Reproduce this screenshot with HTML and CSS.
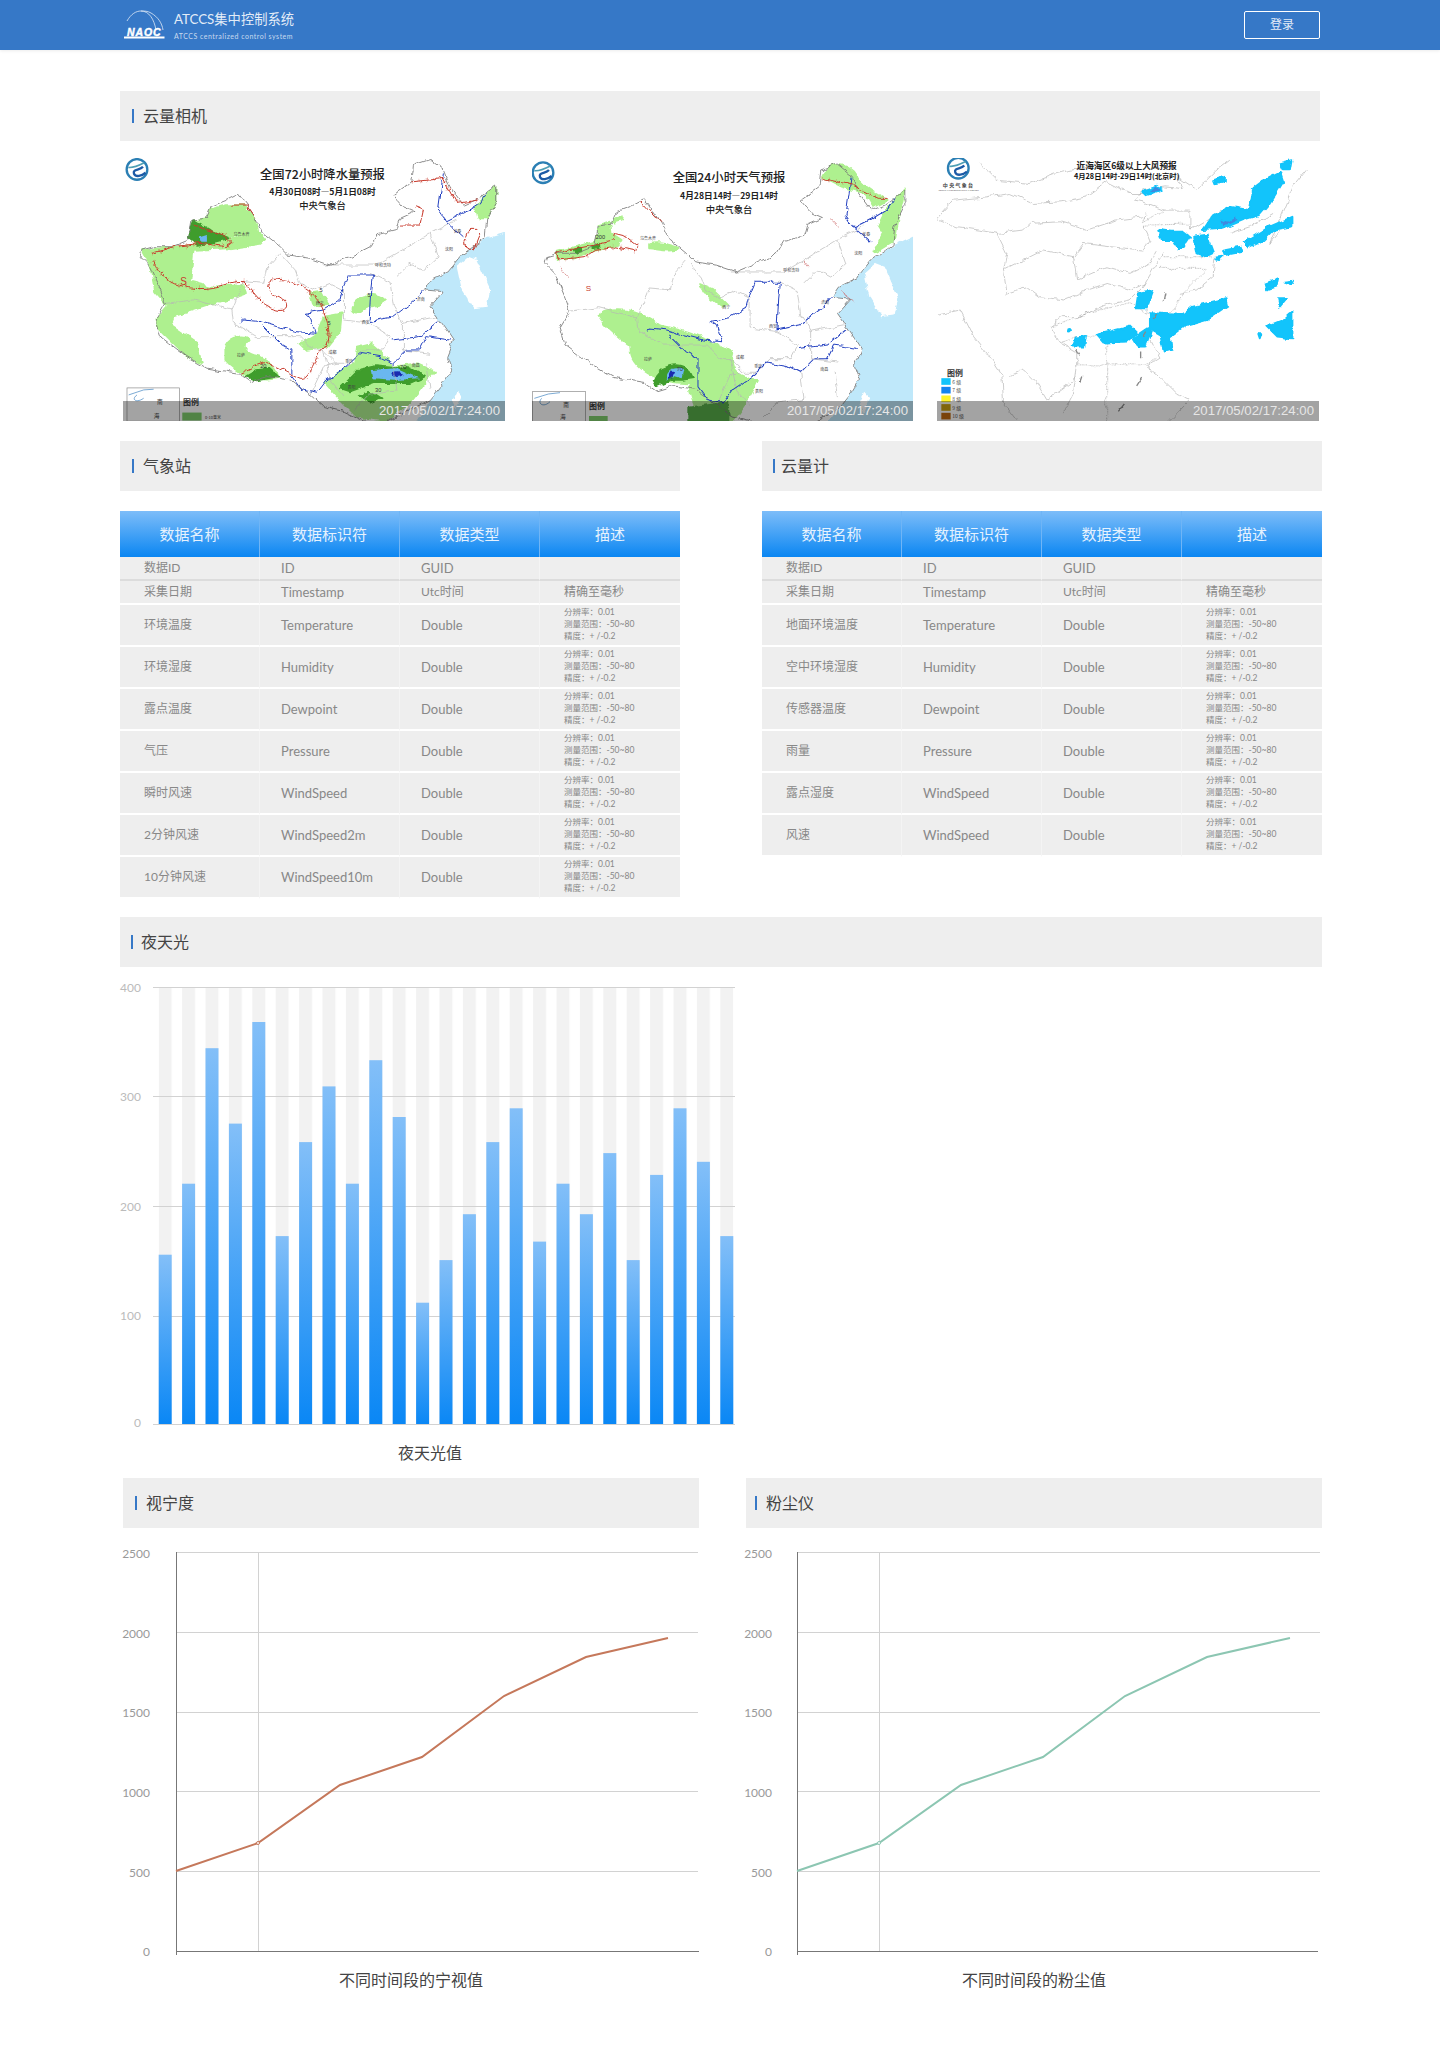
FILE: index.html
```html
<!DOCTYPE html>
<html lang="zh-CN">
  <head>
    <meta charset="UTF-8" />
    <title>ATCCS集中控制系统</title>
    <link rel="stylesheet" href="styles.css">
  </head>
  <body>
    <div class="top">
      <div class="brand">
        <svg class="logo" viewBox="0 0 44 30" width="44" height="30">
          <path d="M5 11C9 4 14 1 19 1c8 0 13 8 15 19" fill="none" stroke="#dfeaf6" stroke-width=".8"/>
          <path d="M19 1c3 0 7 0 10 2 7 4 11 10 12 17" fill="none" stroke="#dfeaf6" stroke-width=".8"/>
          <text x="5" y="25.500" class="logo-word">NAOC</text>
          <rect x="2" y="26.500" width="40.500" height="2" fill="#fff"/>
        </svg>
        <div class="brand-text">
          <div class="brand-name">ATCCS集中控制系统</div>
          <div class="brand-sub">ATCCS centralized control system</div>
        </div>
      </div>
      <a class="login">登录</a>
    </div>

    <div class="wrap">
      <h2 class="bar bar-first"><span>云量相机</span></h2>

      <div class="shots">
        <div class="shot shot-a">
          <svg viewBox="38 24 1147 789" width="382" height="263">
            <defs>
              <filter id="rough" x="-5%" y="-5%" width="110%" height="110%" color-interpolation-filters="sRGB">
                <feTurbulence type="fractalNoise" baseFrequency="0.035" numOctaves="3" seed="4"/>
                <feDisplacementMap in="SourceGraphic" scale="18" xChannelSelector="R" yChannelSelector="G"/>
                <feGaussianBlur stdDeviation="0.9"/>
              </filter>
              <path id="china-land" d="M95 300L130 290 185 290 235 270 245 210 285 205 300 170 350 150 385 132 410 165 437 205 460 250 510 290 535 315 600 325 660 345 720 320 780 290 800 255 860 240 870 205 915 185 880 170 850 135 905 95 910 45 960 28 1000 60 1020 110 1060 165 1105 145 1160 105 1160 150 1130 210 1125 265 1060 310 1015 365 965 390 945 420 1000 425 960 470 1010 540 1030 570 1010 620 1025 660 1000 700 960 750 880 790 800 830 700 785 640 770 600 735 565 710 540 690 470 680 420 695 385 670 290 655 230 620 150 560 135 510 165 460 150 420 120 350 90 320Z"/>
              <path id="china-prov" d="M510 310L470 355 460 400 400 395 365 480 370 520M520 320L555 360 570 400 610 420 660 400 700 420M640 345L800 345 860 310 960 250 1040 210M700 420L700 510 780 520 840 560 820 600 760 600 720 640 680 640 640 600M780 370L840 400 850 470 880 520 980 500M880 520L880 600 960 610M850 640L860 720 780 730 730 780M950 640L960 720M600 735L640 650 680 640M370 520L440 560 570 560 610 600 640 600M165 460L250 450 365 480M960 250L985 320 940 360 900 340 860 380M640 600L660 690 700 740"/>
              <path id="china-rivers" d="M390 520L400 510 450 515 500 530 560 545 615 550 600 500 585 490 640 480 690 450 700 410 715 375 790 375 785 420 780 515 850 500 915 450 940 420M460 530L510 580 545 600 545 680 575 720 620 730 650 690 710 650 750 610 810 620 850 640 890 600 930 600 950 560 1020 570M845 570L930 560 985 515M1000 70L985 180 1010 215 1060 260M1010 215L1060 190 1110 160 1130 130"/>
              <g id="naoc-mark">
                <circle r="31" fill="#fff" stroke="#2b7fb4" stroke-width="7"/>
                <path d="M-26 -6C-12 -4 6 -12 22 -20" fill="none" stroke="#4f9fb5" stroke-width="5"/>
                <path d="M18 -8C8 4 -14 -2 -9 13 -4 24 14 20 26 10" fill="none" stroke="#1c5aa6" stroke-width="7"/>
              </g>
            </defs>
            <rect x="38" y="24" width="1147" height="789" fill="#fff"/>
            <g filter="url(#rough)">
              <path class="sea" d="M1215 240L1130 265 1060 310 1015 365 965 390 945 420 1000 425 960 470 1010 540 1030 570 1010 620 1025 660 1000 700 960 750 900 850 1215 850Z"/>
              <path class="korea" d="M1040 350L1075 320 1100 330 1140 420 1130 470 1090 475 1055 420Z"/>
              <path class="korea" d="M1042 720L1056 735 1036 775 1026 755Z"/>
              <use href="#china-land" class="land"/>
              <path class="g1" d="M95 300L240 285 360 268 450 250 465 268 450 282 360 295 250 300 240 395 300 410 400 405 410 430 330 458 230 442 170 465 135 425 120 350Z"/>
              <path class="g1" d="M300 178L350 165 400 165 437 205 445 250 350 262 250 210 285 205Z"/>
              <path class="g1" d="M172 468L230 445 320 458 190 500 180 525 260 580 275 640 230 620 140 530 135 510Z"/>
              <path class="g1" d="M345 590C360 555 420 550 415 575 395 590 400 610 450 620 490 640 510 670 500 685 440 700 380 670 345 630Z"/>
              <path class="g1" d="M600 430L635 425 655 465 610 470ZM725 465C750 430 800 425 825 450 815 470 780 465 760 480 735 500 720 490 725 465ZM640 500L695 490 690 540 650 590 590 600 570 580 620 550Z"/>
              <path class="g1" d="M1098 170L1135 125 1160 110 1160 150 1130 205 1105 205ZM740 590L780 580 815 610 850 650 920 640 975 665 945 700 900 760 830 813 740 800 690 750 645 700 680 670 735 640Z"/>
              <path class="g2" d="M235 265L250 210 300 240 360 265 300 280 260 285Z"/>
              <path class="g2" d="M405 680L440 660 480 655 505 680 440 692ZM690 715L750 655 800 645 900 655 945 680 900 700 790 700 720 725ZM745 735L780 722 815 745 780 762Z"/>
              <path d="M785 660L860 655 925 685 860 690 790 685ZM265 262L290 255 290 275 270 275Z" fill="#6ab7ef"/>
              <ellipse cx="862" cy="674" rx="18" ry="7" fill="#1a2ab0"/>
              <use href="#china-prov" class="prov"/>
              <use href="#china-land" class="coast"/>
              <use href="#china-rivers" class="river"/>
              <path class="front" d="M125 310L190 290 270 280 350 290 365 280 340 255 250 225M130 335C160 400 220 420 290 415 340 410 370 390 400 395 430 420 450 470 500 480 540 490 530 450 500 440 470 430 460 400 490 388 550 385 600 420 630 460 660 520 670 590 630 600 610 640 600 690 570 685L540 670 470 635 430 650 390 670M905 95L1000 85 1040 160 1100 150M870 225L930 225 940 180 915 170M1105 235L1080 235 1060 280 1090 300 1110 250M365 165L410 165 435 200"/>
              <path class="front-tick" d="M125 310L190 290 270 280 350 290 365 280 340 255M130 335C160 400 220 420 290 415 340 410 370 390 400 395 430 420 450 470 500 480M490 388C550 385 600 420 630 460 660 520 670 590 630 600 610 640 600 690 570 685M905 95L1000 85 1040 160 1100 150"/>
            </g>
            <g transform="translate(80 58)"><use href="#naoc-mark"/></g>
            <text x="637" y="87" class="map-title" text-anchor="middle">全国72小时降水量预报</text>
            <text x="637" y="135" class="map-date" text-anchor="middle">4月30日08时—5月1日08时</text>
            <text x="637" y="178" class="map-org" text-anchor="middle">中央气象台</text>
            <text x="370" y="258" class="city">乌鲁木齐</text><text x="380" y="620" class="city">拉萨</text>
            <text x="655" y="612" class="city">成都</text><text x="705" y="640" class="city">重庆</text>
            <text x="712" y="716" class="city">贵阳</text><text x="905" y="652" class="city">南昌</text>
            <text x="920" y="452" class="city">济南</text><text x="1030" y="248" class="city">长春</text>
            <text x="1005" y="302" class="city">沈阳</text><text x="795" y="352" class="city">呼和浩特</text>
            <text x="755" y="522" class="city">西安</text><text x="617" y="464" class="city">西宁</text>
            <text x="628" y="425" class="num">5</text><text x="450" y="653" class="num">20</text>
            <text x="795" y="726" class="num">30</text><text x="870" y="657" class="num">70</text>
            <text x="772" y="440" class="num">5</text><text x="652" y="526" class="num">5</text>
            <text x="210" y="404" class="s-mark">S</text>
            <rect x="50" y="714" width="158" height="100" fill="#fff" stroke="#888" stroke-width="2"/>
            <path d="M55 735L100 720 130 718M80 735C60 750 80 760 100 745" fill="none" stroke="#3a7ebd" stroke-width="2"/>
            <text x="140" y="762" class="inset">南</text><text x="130" y="803" class="inset">海</text>
            <text x="218" y="764" class="legend-title">图例</text>
            <rect x="216" y="788" width="58" height="24" fill="#7fce6d"/>
            <text x="284" y="806" class="city">0-10毫米</text>
          </svg>
          <div class="stamp">2017/05/02/17:24:00</div>
        </div>

        <div class="shot shot-b">
          <svg viewBox="21 24 1143 789" width="381" height="263">
            <rect x="21" y="24" width="1143" height="789" fill="#fff"/>
            <g filter="url(#rough)">
              <g transform="translate(-31 14) scale(1.009 1.02)">
                <path class="sea" d="M1215 225L1130 265 1060 310 1015 365 965 390 945 420 1000 425 960 470 1010 540 1030 570 1010 620 1025 660 1000 700 960 750 900 830 1215 830Z"/>
                <path class="korea" d="M1040 350L1075 320 1100 330 1140 420 1130 470 1090 475 1055 420Z"/>
                <path class="korea" d="M1042 700L1056 715 1036 760 1026 735Z"/>
                <use href="#china-land" class="land"/>
              </g>
              <path class="g1" d="M890 80C905 45 950 30 985 65 1010 110 1050 125 1085 150L1045 172 1020 130 950 110Z"/>
              <path class="g1" d="M1085 175L1140 115 1115 240 1110 270 1045 310 1075 250 1060 225Z"/>
              <path class="g1" d="M220 225L255 215 260 250 290 270 280 285 210 300 150 325 95 330 95 305 210 275Z"/>
              <path class="g1" d="M262 208L288 198 285 212 265 218ZM372 282C400 275 450 285 458 295 440 305 400 295 372 292ZM522 402L565 420 610 465 590 470 540 430Z"/>
              <path class="g1" d="M220 495C260 470 340 475 400 525 480 540 560 570 625 610 610 660 640 680 700 690 680 730 660 770 610 830 520 830 500 760 490 700 400 700 320 660 315 590 280 560 230 520 220 495Z"/>
              <path d="M490 770L610 755 610 830 490 830Z" fill="#56ad48"/>
              <path class="g2" d="M385 690C400 650 460 625 495 665L505 685 470 690 440 690 395 710Z"/>
              <path d="M422 690C425 660 450 645 475 662L470 685 445 678Z" fill="#6ab7ef"/>
              <path d="M428 688L440 660 450 670 445 682Z" fill="#1a2ab0"/>
              <path class="g2" d="M145 298L165 292 170 305 150 308ZM200 290L222 280 225 292 205 295Z"/>
              <g transform="translate(-31 14) scale(1.009 1.02)">
                <use href="#china-prov" class="prov"/>
                <use href="#china-land" class="coast"/>
                <use href="#china-rivers" class="river"/>
              </g>
              <path class="front" d="M95 310L100 330 180 320 215 298 268 290 330 302 340 288 300 258 268 250 265 272 210 285 130 300ZM350 155L408 218M890 85L980 105 1060 145 1085 145"/>
              <path class="front-tick" d="M100 330L180 320 215 298 268 290 330 302 340 288 300 258M890 85L980 105 1060 145"/>
              <path d="M105 350L125 380M915 205L940 230M835 330L852 352M948 425L985 452" stroke="#c66" stroke-width="2" fill="none"/>
            </g>
            <g transform="translate(54 68)"><use href="#naoc-mark"/></g>
            <text x="612" y="97" class="map-title" text-anchor="middle">全国24小时天气预报</text>
            <text x="612" y="146" class="map-date" text-anchor="middle">4月28日14时—29日14时</text>
            <text x="612" y="188" class="map-org" text-anchor="middle">中央气象台</text>
            <text x="345" y="270" class="city">乌鲁木齐</text><text x="357" y="632" class="city">拉萨</text>
            <text x="633" y="626" class="city">成都</text><text x="688" y="654" class="city">重庆</text>
            <text x="690" y="728" class="city">贵阳</text><text x="886" y="664" class="city">南昌</text>
            <text x="888" y="462" class="city">济南</text><text x="1012" y="258" class="city">长春</text>
            <text x="988" y="316" class="city">沈阳</text><text x="775" y="366" class="city">呼和浩特</text>
            <text x="732" y="534" class="city">西安</text><text x="592" y="476" class="city">西宁</text>
            <text x="455" y="664" class="num">70</text><text x="212" y="268" class="num">200</text>
            <text x="182" y="424" class="s-mark s-small">S</text>
            <rect x="23" y="724" width="158" height="95" fill="#fff" stroke="#888" stroke-width="2"/>
            <path d="M28 745L70 732 105 728M50 745C35 760 55 775 75 755" fill="none" stroke="#3a7ebd" stroke-width="2"/>
            <text x="115" y="772" class="inset">南</text><text x="105" y="806" class="inset">海</text>
            <text x="192" y="776" class="legend-title">图例</text>
            <rect x="192" y="798" width="56" height="20" fill="#7fce6d"/>
          </svg>
          <div class="stamp">2017/05/02/17:24:00</div>
        </div>

        <div class="shot shot-c">
          <svg viewBox="20 24 1148 789" width="382" height="263">
            <rect x="20" y="24" width="1148" height="789" fill="#fff"/>
            <g filter="url(#rough)">
              <path class="thin" d="M150 40L200 90 300 100 380 70 420 60 510 45M20 205L70 150 170 140 240 130 310 160 390 155 470 140 530 95 600 130 650 130M20 205L80 230 150 240 200 250 280 240 300 220 390 215 470 240 560 210 640 200M200 250L230 310 220 360 260 340 340 300 430 320 460 280 540 290 640 300 660 270 640 225M220 360L230 430 290 410 330 440 400 450 470 420 530 400 600 420 650 400M430 320L440 390 530 350 600 370 660 340 680 300M20 495L90 480 130 560 170 610 215 680 220 760 260 813M360 530L400 500 440 500 470 490 530 465 600 450 640 410 680 340 700 310M700 180L640 155 610 150 640 120 700 110 760 115 740 80 800 120 860 60 900 30M700 180L780 180 780 240 830 210 870 180M360 530L390 580 440 610 440 660 430 730 400 790M240 680L280 660 320 700 350 750 420 700 440 680M660 570L690 625 650 650 690 680 740 730 780 750 720 813M1050 240L1020 280 1060 180 1090 110 1130 60M855 320L850 380 800 420 750 430M900 250L960 230 1030 190"/>
              <path class="dash" d="M640 225L780 222 780 240M700 320L850 320M690 355L835 355 760 430 720 490 650 490 660 420M440 645L650 645 680 625M395 580L440 558 650 560 660 540M530 560L530 813M360 530L470 490 600 458 650 490M700 180L640 215 650 190"/>
              <path class="gust" d="M685 240L720 245 760 245 780 260 760 290 745 295 730 270 695 270ZM790 260L830 255 850 310 830 320 800 310ZM850 195L900 170 960 180 970 115 1010 85 1050 65 1060 95 1020 160 990 195 940 210 880 235 820 240ZM1050 40L1085 30 1080 60 1060 60ZM850 90L885 80 885 95 855 102ZM945 275L1020 230 1088 200 1088 228 1030 240 1000 270 955 292ZM880 300L930 290 935 305 885 315ZM860 322L875 320 865 330ZM1010 400L1045 388 1040 410 1015 418ZM1065 395L1090 392 1085 402ZM1045 445L1070 445 1050 470ZM1010 530L1060 510 1088 485 1088 565 1040 560ZM985 550L995 550 990 565ZM640 125L680 110 695 120 650 135ZM625 430L670 420 650 475 618 475ZM660 490L760 495 790 470 890 445 895 465 830 510 760 530 720 560 725 600 705 605 695 560 660 540ZM500 555L600 530 620 550 590 575 520 578ZM610 565L655 535 665 540 645 590 625 590ZM440 560L468 555 462 590 428 590Z"/>
              <path d="M875 205L895 215 915 200 920 210 895 222 880 225Z" fill="#3e8ae0"/>
              <path d="M660 122L680 110 690 120 670 128Z" fill="#3e8ae0"/>
              <circle cx="418" cy="544" r="7" fill="#12c4fb"/>
              <path d="M440 600L450 620M635 605V625M650 545L640 562M680 492L670 508M705 430L700 455M455 680L450 695M635 685L620 708M580 765L565 785" stroke="#888" stroke-width="4"/>
            </g>
            <g transform="translate(84 54)"><use href="#naoc-mark"/></g>
            <text x="85" y="110" class="org-cn" text-anchor="middle">中央气象台</text>
            <text x="85" y="124" class="org-en" text-anchor="middle">CENTRAL METEOROLOGICAL CENTER</text>
            <text x="590" y="55" class="wind-title" text-anchor="middle">近海海区6级以上大风预报</text>
            <text x="590" y="87" class="wind-date" text-anchor="middle">4月28日14时-29日14时(北京时)</text>
            <text x="50" y="678" class="legend-title">图例</text>
            <rect x="33" y="685" width="28" height="20" fill="#12c4fb"/><text x="66" y="702" class="lev">6 级</text>
            <rect x="33" y="711" width="28" height="20" fill="#1583ef"/><text x="66" y="728" class="lev">7 级</text>
            <rect x="33" y="737" width="28" height="20" fill="#fff22a"/><text x="66" y="754" class="lev">8 级</text>
            <rect x="33" y="763" width="28" height="20" fill="#c8a012"/><text x="66" y="780" class="lev">9 级</text>
            <rect x="33" y="789" width="28" height="20" fill="#bf6a10"/><text x="66" y="806" class="lev">10 级</text>
          </svg>
          <div class="stamp">2017/05/02/17:24:00</div>
        </div>
      </div>

      <div class="tables">
        <div class="col">
          <h2 class="bar"><span>气象站</span></h2>
          <table class="data">
            <tr><th>数据名称</th><th>数据标识符</th><th>数据类型</th><th>描述</th></tr>
            <tr class="r1"><td>数据ID</td><td>ID</td><td>GUID</td><td></td></tr>
            <tr class="r2"><td>采集日期</td><td>Timestamp</td><td class="mixed">Utc时间</td><td>精确至毫秒</td></tr>
            <tr><td>环境温度</td><td>Temperature</td><td>Double</td><td class="desc">分辨率：0.01<br>测量范围：-50~80<br>精度：+ /-0.2</td></tr>
            <tr><td>环境湿度</td><td>Humidity</td><td>Double</td><td class="desc">分辨率：0.01<br>测量范围：-50~80<br>精度：+ /-0.2</td></tr>
            <tr><td>露点温度</td><td>Dewpoint</td><td>Double</td><td class="desc">分辨率：0.01<br>测量范围：-50~80<br>精度：+ /-0.2</td></tr>
            <tr><td>气压</td><td>Pressure</td><td>Double</td><td class="desc">分辨率：0.01<br>测量范围：-50~80<br>精度：+ /-0.2</td></tr>
            <tr><td>瞬时风速</td><td>WindSpeed</td><td>Double</td><td class="desc">分辨率：0.01<br>测量范围：-50~80<br>精度：+ /-0.2</td></tr>
            <tr><td>2分钟风速</td><td>WindSpeed2m</td><td>Double</td><td class="desc">分辨率：0.01<br>测量范围：-50~80<br>精度：+ /-0.2</td></tr>
            <tr><td>10分钟风速</td><td>WindSpeed10m</td><td>Double</td><td class="desc">分辨率：0.01<br>测量范围：-50~80<br>精度：+ /-0.2</td></tr>
          </table>
        </div>
        <div class="col">
          <h2 class="bar bar-tight"><span>云量计</span></h2>
          <table class="data">
            <tr><th>数据名称</th><th>数据标识符</th><th>数据类型</th><th>描述</th></tr>
            <tr class="r1"><td>数据ID</td><td>ID</td><td>GUID</td><td></td></tr>
            <tr class="r2"><td>采集日期</td><td>Timestamp</td><td class="mixed">Utc时间</td><td>精确至毫秒</td></tr>
            <tr><td>地面环境温度</td><td>Temperature</td><td>Double</td><td class="desc">分辨率：0.01<br>测量范围：-50~80<br>精度：+ /-0.2</td></tr>
            <tr><td>空中环境湿度</td><td>Humidity</td><td>Double</td><td class="desc">分辨率：0.01<br>测量范围：-50~80<br>精度：+ /-0.2</td></tr>
            <tr><td>传感器温度</td><td>Dewpoint</td><td>Double</td><td class="desc">分辨率：0.01<br>测量范围：-50~80<br>精度：+ /-0.2</td></tr>
            <tr><td>雨量</td><td>Pressure</td><td>Double</td><td class="desc">分辨率：0.01<br>测量范围：-50~80<br>精度：+ /-0.2</td></tr>
            <tr><td>露点湿度</td><td>WindSpeed</td><td>Double</td><td class="desc">分辨率：0.01<br>测量范围：-50~80<br>精度：+ /-0.2</td></tr>
            <tr><td>风速</td><td>WindSpeed</td><td>Double</td><td class="desc">分辨率：0.01<br>测量范围：-50~80<br>精度：+ /-0.2</td></tr>
          </table>
        </div>
      </div>

      <h2 class="bar bar-night"><span>夜天光</span></h2>
      <svg class="chart-svg" viewBox="120 967 620 511" width="620" height="511">
        <defs>
          <pattern id="stripes" x="158.7" y="0" width="23.4" height="10" patternUnits="userSpaceOnUse">
            <rect width="13" height="10" fill="#f2f2f2"/>
          </pattern>
          <linearGradient id="barfill" x1="0" y1="0" x2="0" y2="1">
            <stop offset="0" stop-color="#83bff8"/>
            <stop offset="1" stop-color="#0a87f5"/>
          </linearGradient>
        </defs>
        <rect x="158.7" y="987" width="574.6" height="437" fill="url(#stripes)"/>
        <path class="grid" d="M153 987.5H735M153 1096.5H735M153 1206.5H735M153 1316.5H735M153 1424.5H735"/>
        <g fill="url(#barfill)">
          <rect x="158.7" y="1254.7" width="13" height="169.3"/>
          <rect x="182.1" y="1183.7" width="13" height="240.3"/>
          <rect x="205.5" y="1048.2" width="13" height="375.8"/>
          <rect x="228.9" y="1123.6" width="13" height="300.4"/>
          <rect x="252.3" y="1022" width="13" height="402"/>
          <rect x="275.7" y="1236.1" width="13" height="187.9"/>
          <rect x="299.1" y="1142.1" width="13" height="281.9"/>
          <rect x="322.5" y="1086.4" width="13" height="337.6"/>
          <rect x="345.9" y="1183.7" width="13" height="240.3"/>
          <rect x="369.3" y="1060.2" width="13" height="363.8"/>
          <rect x="392.7" y="1117" width="13" height="307"/>
          <rect x="416.1" y="1302.7" width="13" height="121.3"/>
          <rect x="439.5" y="1260.1" width="13" height="163.9"/>
          <rect x="462.9" y="1214.2" width="13" height="209.8"/>
          <rect x="486.3" y="1142.1" width="13" height="281.9"/>
          <rect x="509.7" y="1108.3" width="13" height="315.7"/>
          <rect x="533.1" y="1241.6" width="13" height="182.4"/>
          <rect x="556.5" y="1183.7" width="13" height="240.3"/>
          <rect x="579.9" y="1214.2" width="13" height="209.8"/>
          <rect x="603.3" y="1153.1" width="13" height="270.9"/>
          <rect x="626.7" y="1260.1" width="13" height="163.9"/>
          <rect x="650.1" y="1174.9" width="13" height="249.1"/>
          <rect x="673.5" y="1108.3" width="13" height="315.7"/>
          <rect x="696.9" y="1161.8" width="13" height="262.2"/>
          <rect x="720.3" y="1236.1" width="13" height="187.9"/>
        </g>
        <g class="ticks-night" text-anchor="end">
          <text x="141" y="992">400</text>
          <text x="141" y="1101">300</text>
          <text x="141" y="1211">200</text>
          <text x="141" y="1320">100</text>
          <text x="141" y="1427">0</text>
        </g>
        <text x="430" y="1459" class="caption" text-anchor="middle">夜天光值</text>
      </svg>

      <div class="lines">
        <div class="col-line">
          <h2 class="bar"><span>视宁度</span></h2>
          <svg class="chart-svg" viewBox="123 1528 576 472" width="576" height="472">
            <path class="grid" d="M176 1552.5H698M176 1632.5H698M176 1712.5H698M176 1791.5H698M176 1871.5H698M258.500 1552V1951"/>
            <path class="axis" d="M176.500 1552V1955M176 1951.500H699"/>
            <path class="line line-red" d="M176 1871L258 1843 340 1785 422 1757 504 1696 586 1657 668 1638"/>
            <circle cx="258" cy="1843" r="1.5" class="dot dot-red"/>
            <g class="ticks" text-anchor="end">
              <text x="150" y="1558">2500</text>
              <text x="150" y="1638">2000</text>
              <text x="150" y="1717">1500</text>
              <text x="150" y="1797">1000</text>
              <text x="150" y="1877">500</text>
              <text x="150" y="1956">0</text>
            </g>
            <text x="411" y="1986" class="caption" text-anchor="middle">不同时间段的宁视值</text>
          </svg>
        </div>
        <div class="col-line">
          <h2 class="bar bar-dust"><span>粉尘仪</span></h2>
          <svg class="chart-svg" viewBox="746 1528 576 472" width="576" height="472">
            <path class="grid" d="M797 1552.500H1320M797 1632.500H1320M797 1712.500H1320M797 1791.500H1320M797 1871.500H1320M879.500 1552V1951"/>
            <path class="axis" d="M797.500 1552V1955M797 1951.500H1318"/>
            <path class="line line-green" d="M797 1871L879 1843 961 1785 1043 1757 1125 1696 1207 1657 1290 1638"/>
            <circle cx="879" cy="1843" r="1.500" class="dot dot-green"/>
            <g class="ticks" text-anchor="end">
              <text x="772" y="1558">2500</text>
              <text x="772" y="1638">2000</text>
              <text x="772" y="1717">1500</text>
              <text x="772" y="1797">1000</text>
              <text x="772" y="1877">500</text>
              <text x="772" y="1956">0</text>
            </g>
            <text x="1034" y="1986" class="caption" text-anchor="middle">不同时间段的粉尘值</text>
          </svg>
        </div>
      </div>
    </div>
  </body>
</html>
```

FILE: styles.css
```css
* {
  box-sizing: border-box;
}

html,
body {
  margin: 0;
  padding: 0;
}

body {
  font-family: Lato, "Noto Sans CJK SC", sans-serif;
  color: #444;
  background: #fff;
  height: 2069px;
  overflow: hidden;
}

svg {
  display: block;
}

/* top bar */
.top {
  height: 50px;
  background: #3678c7;
  box-shadow: 0 1px 3px rgba(0, 0, 0, 0.08);
  padding: 0 120px 0 122px;
  display: flex;
  align-items: center;
  justify-content: space-between;
}

.brand {
  display: flex;
  align-items: center;
  gap: 8px;
}

.logo-word {
  font: italic 700 10.5px "Liberation Sans", sans-serif;
  fill: #fff;
  stroke: #fff;
  stroke-width: 0.4;
  letter-spacing: 0.9px;
}

.brand-name {
  font-size: 13.3px;
  line-height: 18px;
  color: #e3ecf7;
}

.brand-sub {
  font-size: 7px;
  line-height: 10px;
  margin-top: 3px;
  letter-spacing: 0.5px;
  color: #c8daef;
}

.login {
  width: 76px;
  height: 28px;
  border: 1px solid #fff;
  border-radius: 2px;
  color: #e3ecf7;
  font-size: 12px;
  line-height: 26px;
  text-align: center;
}

/* page */
.wrap {
  width: 1202px;
  margin-left: 120px;
  padding-top: 41px;
}

.bar {
  margin: 0;
  height: 50px;
  background: #eee;
  font-size: 16px;
  font-weight: 400;
  line-height: 50px;
  padding-left: 12px;
  color: #444;
}

.bar span {
  display: block;
  border-left: 2px solid #3678c7;
  padding-left: 9px;
  line-height: 14px;
  position: relative;
  top: 18px;
}

.bar-first {
  width: 1200px;
}

.bar-tight {
  padding-left: 11px;
}

.bar-tight span {
  padding-left: 6px;
}

.bar-night {
  padding-left: 11px;
}

.bar-night span {
  padding-left: 8px;
}

.bar-dust {
  padding-left: 9px;
}

/* map pictures */
.shots {
  display: flex;
  margin-top: 17px;
  padding-left: 3px;
}

.shot {
  position: relative;
  height: 263px;
  overflow: hidden;
}

.shot-a {
  width: 382px;
  margin-right: 27px;
}

.shot-b {
  width: 381px;
  margin-right: 24px;
}

.shot-c {
  width: 382px;
}

.stamp {
  position: absolute;
  left: 0;
  right: 0;
  bottom: 0;
  height: 20px;
  background: rgba(0, 0, 0, 0.36);
  color: #e6e6e6;
  font: 13.2px/20px "Liberation Sans", sans-serif;
  text-align: right;
  padding-right: 5px;
}

.sea {
  fill: #bfe8fa;
}

.korea,
.land {
  fill: #fff;
}

.g1 {
  fill: #aef08f;
  stroke: #aef08f;
  stroke-width: 5;
  stroke-linejoin: round;
}

.g2 {
  fill: #3f9d2c;
  stroke: #3f9d2c;
  stroke-width: 4;
  stroke-linejoin: round;
}

.prov {
  fill: none;
  stroke: #b5b5b5;
  stroke-width: 2;
}

.coast {
  fill: none;
  stroke: #777;
  stroke-width: 2.5;
}

.river {
  fill: none;
  stroke: #2340c0;
  stroke-width: 3;
}

.front {
  fill: none;
  stroke: #c8392b;
  stroke-width: 3;
}

.front-tick {
  fill: none;
  stroke: #c8392b;
  stroke-width: 14;
  stroke-dasharray: 1.5 20;
  opacity: 0.55;
}

.map-title {
  font: 500 37px "Noto Sans CJK SC", sans-serif;
  fill: #222;
}

.map-date {
  font: 700 26px "Noto Sans CJK SC", sans-serif;
  fill: #222;
}

.map-org {
  font: 500 28px "Noto Sans CJK SC", sans-serif;
  fill: #222;
}

.city {
  font: 12px "Noto Sans CJK SC", sans-serif;
  fill: #444;
}

.num {
  font: 17px "Liberation Sans", sans-serif;
  fill: #333;
}

.s-mark {
  font: 30px "Liberation Sans", sans-serif;
  fill: #c8392b;
}

.s-small {
  font-size: 24px;
}

.inset {
  font: 17px "Noto Sans CJK SC", sans-serif;
  fill: #333;
}

.legend-title {
  font: 700 24px "Noto Sans CJK SC", sans-serif;
  fill: #333;
}

.thin {
  fill: none;
  stroke: #a9a9a9;
  stroke-width: 1.8;
}

.dash {
  fill: none;
  stroke: #8c8c8c;
  stroke-width: 1.6;
  stroke-dasharray: 3 2;
}

.gust {
  fill: #12c4fb;
  stroke: #12c4fb;
  stroke-width: 6;
  stroke-linejoin: round;
}

.org-cn {
  font: 700 15px "Noto Sans CJK SC", sans-serif;
  letter-spacing: 4px;
  fill: #444;
}

.org-en {
  font: 6.5px "Liberation Sans", sans-serif;
  fill: #666;
}

.wind-title {
  font: 700 26px "Noto Sans CJK SC", sans-serif;
  fill: #222;
}

.wind-date {
  font: 700 22px "Noto Sans CJK SC", sans-serif;
  fill: #111;
}

.lev {
  font: 15px "Noto Sans CJK SC", sans-serif;
  fill: #555;
}

/* tables */
.tables {
  display: flex;
  justify-content: space-between;
  margin-top: 20px;
  margin-bottom: 18px;
}

.col {
  width: 560px;
}

.data {
  width: 560px;
  margin-top: 20px;
  border-collapse: separate;
  border-spacing: 0;
  table-layout: fixed;
  font-size: 12px;
  color: #888;
}

.data th {
  height: 46px;
  padding: 0 0 2px;
  font-size: 15px;
  font-weight: 400;
  color: #e6f2fe;
  text-align: center;
  background: linear-gradient(#7dbdf9, #0a86f2);
  border-right: 1px solid #6fb5f6;
}

.data th:last-child,
.data td:last-child {
  border-right: 0;
}

.data td {
  height: 42px;
  padding: 0 0 0 24px;
  background: #eee;
  border-right: 1px solid #f4f4f4;
  border-bottom: 2px solid #fff;
  line-height: 14px;
}

.data td:nth-child(2),
.data td:nth-child(3) {
  padding-left: 21px;
  font-size: 13px;
}

.data .r1 td {
  height: 24px;
  border-bottom: 2px solid #dcdcdc;
}

.data .r2 td {
  height: 24px;
}

.data td.mixed {
  font-size: 12px;
}

.data .desc {
  font-size: 8.5px;
  line-height: 11.7px;
}

/* charts */
.chart-svg {
  overflow: visible;
}

.grid {
  fill: none;
  stroke: #d2d2d2;
  stroke-width: 1;
}

.axis {
  fill: none;
  stroke: #777;
  stroke-width: 1;
}

.ticks-night text {
  font-size: 12px;
  fill: #bbb;
}

.ticks text {
  font-size: 12px;
  fill: #999;
}

.caption {
  font-size: 16px;
  fill: #444;
}

.lines {
  display: flex;
  justify-content: space-between;
  padding-left: 3px;
}

.col-line {
  width: 576px;
}

.line {
  fill: none;
  stroke-width: 2;
}

.line-red {
  stroke: #c5785b;
}

.line-green {
  stroke: #8cc6b2;
}

.dot {
  fill: #fff;
}

.dot-red {
  stroke: #c5785b;
}

.dot-green {
  stroke: #8cc6b2;
}
```
